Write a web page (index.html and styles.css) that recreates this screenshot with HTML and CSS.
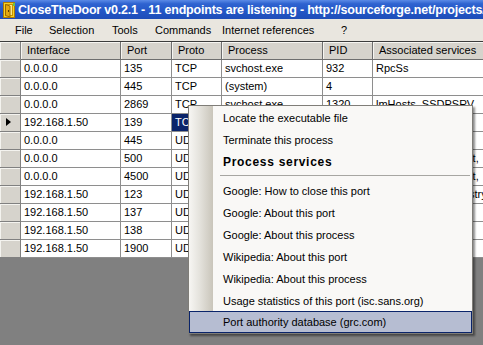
FILE: index.html
```html
<!DOCTYPE html>
<html>
<head>
<meta charset="utf-8">
<link rel="stylesheet" href="styles.css">
</head>
<body>
<div class="window">
  <div class="titlebar">
    <svg class="appicon" width="13" height="16" viewBox="0 0 13 16">
      <rect x="0.5" y="0.5" width="11" height="15" fill="#f6d22a" stroke="#b07a00"/>
      <rect x="2.5" y="2.5" width="7" height="11" fill="#fbe88a" stroke="#c99400"/>
      <path d="M2.5 2.5 L7 4 L7 15 L2.5 13.5 Z" fill="#e5a910" stroke="#9a6a00" stroke-width="1"/>
      <rect x="5" y="8" width="1" height="2" fill="#5a3a00"/>
      <rect x="10" y="1" width="2" height="3" fill="#6cc04a"/>
    </svg>
    <span class="title">CloseTheDoor v0.2.1 - 11 endpoints are listening - http://sourceforge.net/projects/closethedoor</span>
  </div>
  <div class="menubar">
    <span>File</span>
    <span>Selection</span>
    <span>Tools</span>
    <span>Commands</span>
    <span>Internet references</span>
    <span>?</span>
  </div>
  <div class="grid">
    <div class="row header">
      <div class="rh"></div>
      <div class="c">Interface</div>
      <div class="c">Port</div>
      <div class="c">Proto</div>
      <div class="c">Process</div>
      <div class="c">PID</div>
      <div class="c">Associated services</div>
    </div>
    <div class="row">
      <div class="rh"></div><div class="c">0.0.0.0</div><div class="c">135</div><div class="c">TCP</div><div class="c">svchost.exe</div><div class="c">932</div><div class="c">RpcSs</div>
    </div>
    <div class="row">
      <div class="rh"></div><div class="c">0.0.0.0</div><div class="c">445</div><div class="c">TCP</div><div class="c">(system)</div><div class="c">4</div><div class="c"></div>
    </div>
    <div class="row">
      <div class="rh"></div><div class="c">0.0.0.0</div><div class="c">2869</div><div class="c">TCP</div><div class="c">svchost.exe</div><div class="c">1320</div><div class="c">lmHosts, SSDPSRV</div>
    </div>
    <div class="row">
      <div class="rh current"><span class="arrow"></span></div><div class="c">192.168.1.50</div><div class="c">139</div><div class="c sel">TCP</div><div class="c">(system)</div><div class="c">4</div><div class="c"></div>
    </div>
    <div class="row">
      <div class="rh"></div><div class="c">0.0.0.0</div><div class="c">445</div><div class="c">UDP</div><div class="c">(system)</div><div class="c">4</div><div class="c"></div>
    </div>
    <div class="row">
      <div class="rh"></div><div class="c">0.0.0.0</div><div class="c">500</div><div class="c">UDP</div><div class="c">lsass.exe</div><div class="c">684</div><div class="c">SamSs, PolicyAgent,</div>
    </div>
    <div class="row">
      <div class="rh"></div><div class="c">0.0.0.0</div><div class="c">4500</div><div class="c">UDP</div><div class="c">lsass.exe</div><div class="c">684</div><div class="c">SamSs, PolicyAgent,</div>
    </div>
    <div class="row">
      <div class="rh"></div><div class="c">192.168.1.50</div><div class="c">123</div><div class="c">UDP</div><div class="c">svchost.exe</div><div class="c">1020</div><div class="c">Dhcp, RemoteRegistry</div>
    </div>
    <div class="row">
      <div class="rh"></div><div class="c">192.168.1.50</div><div class="c">137</div><div class="c">UDP</div><div class="c">(system)</div><div class="c">4</div><div class="c"></div>
    </div>
    <div class="row">
      <div class="rh"></div><div class="c">192.168.1.50</div><div class="c">138</div><div class="c">UDP</div><div class="c">(system)</div><div class="c">4</div><div class="c"></div>
    </div>
    <div class="row">
      <div class="rh"></div><div class="c">192.168.1.50</div><div class="c">1900</div><div class="c">UDP</div><div class="c">svchost.exe</div><div class="c">1320</div><div class="c">SSDPSRV</div>
    </div>
  </div>
  <div class="workspace"></div>

  <div class="ctxmenu">
    <div class="item">Locate the executable file</div>
    <div class="item">Terminate this process</div>
    <div class="item section">Process services</div>
    <div class="sep"></div>
    <div class="item">Google: How to close this port</div>
    <div class="item">Google: About this port</div>
    <div class="item">Google: About this process</div>
    <div class="item">Wikipedia: About this port</div>
    <div class="item">Wikipedia: About this process</div>
    <div class="item">Usage statistics of this port (isc.sans.org)</div>
    <div class="item hot">Port authority database (grc.com)</div>
  </div>
</div>
</body>
</html>
```
FILE: styles.css
```css
* { box-sizing: border-box; }
html, body {
  margin: 0;
  padding: 0;
  width: 483px;
  height: 345px;
  overflow: hidden;
  background: #808080;
}
.window {
  position: relative;
  width: 483px;
  height: 345px;
  display: flex;
  flex-direction: column;
  font-family: "Liberation Sans", Arial, sans-serif;
  font-size: 11px;
  color: #000;
  overflow: hidden;
}
.titlebar {
  height: 19px;
  flex: none;
  display: flex;
  align-items: center;
  padding-left: 3px;
  background: linear-gradient(to bottom, #5a8ae6 0%, #2f63d0 20%, #2356c6 60%, #1e4db8 100%);
  white-space: nowrap;
  overflow: hidden;
}
.appicon { flex: none; margin-right: 2px; }
.title {
  color: #fff;
  font-weight: bold;
  font-size: 12.5px;
  letter-spacing: -0.2px;
}
.menubar {
  height: 23px;
  flex: none;
  background: #e9e6df;
  display: grid;
  grid-template-columns: 34px 63px 43px 67px 119px auto;
  align-items: center;
  padding-left: 15px;
  border-bottom: 1px solid #3c3c3c;
  white-space: nowrap;
}
.grid {
  flex: none;
  background: #fff;
  width: 640px;
}
.row {
  display: grid;
  grid-template-columns: 21px 100px 51px 50px 101px 50px 267px;
  height: 18px;
}
.c, .rh {
  border-right: 1px solid #8e8e8e;
  border-bottom: 1px solid #8e8e8e;
  padding-left: 3px;
  line-height: 17px;
  white-space: nowrap;
  overflow: hidden;
}
.rh {
  background: #d6d3cc;
  box-shadow: inset 1px 1px 0 #f4f3ef;
  border-right-color: #808080;
  border-bottom-color: #808080;
  position: relative;
}
.header .c {
  background: #d6d3cc;
  box-shadow: inset 1px 1px 0 #f6f5f1;
  border-right-color: #6e6e6e;
  border-bottom-color: #6e6e6e;
  padding-left: 6px;
}
.sel {
  background: #0a246a;
  color: #fff;
}
.arrow {
  position: absolute;
  left: 6px;
  top: 4px;
  width: 0;
  height: 0;
  border-top: 4.5px solid transparent;
  border-bottom: 4.5px solid transparent;
  border-left: 5px solid #000;
}
.workspace {
  flex: 1;
  background: #808080;
}
.ctxmenu {
  position: absolute;
  left: 188px;
  top: 105px;
  width: 285px;
  border: 1px solid #7f7d78;
  background: linear-gradient(to right, #f7f6f3 0%, #e4e2dc 45%, #c9c5ba 100%) 0 0 / 24px 100% no-repeat, #f9f8f6;
  box-shadow: 2px 2px 2px rgba(0, 0, 0, 0.45);
  display: flex;
  flex-direction: column;
}
.item {
  height: 22px;
  line-height: 22px;
  padding-left: 33px;
  white-space: nowrap;
  border: 1px solid transparent;
}
.item.section {
  font-weight: bold;
  font-size: 12px;
  letter-spacing: 0.7px;
  line-height: 23px;
}
.sep {
  height: 7px;
  margin-left: 31px;
  margin-right: 2px;
  border-bottom: 1px solid #a7a6a2;
  position: relative;
  top: -3px;
}
.item.hot {
  background: #b6bdd2;
  border-color: #0a246a;
  line-height: 20px;
}
```
